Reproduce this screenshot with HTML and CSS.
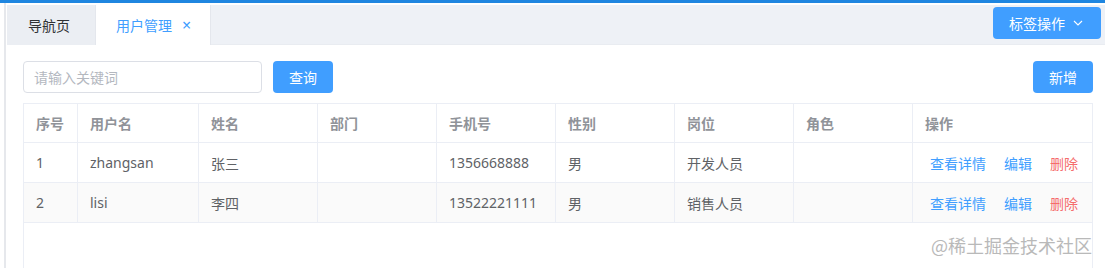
FILE: index.html
```html
<!DOCTYPE html>
<html lang="zh-CN">
<head>
  <meta charset="UTF-8">
  <title>用户管理</title>
  <link rel="stylesheet" href="styles.css">
</head>
<body>
  <div class="app-topline"></div>
  <div class="app-main">
    <div class="tabs-bar">
      <div class="tabs-list">
        <div class="tab-item">导航页</div>
        <div class="tab-item tab-item-active">用户管理<span class="tab-close">×</span></div>
      </div>
      <button class="btn btn-primary tab-action">标签操作
        <svg class="tab-action-arrow" viewBox="0 0 10 6" width="10" height="6"><polyline points="1,1 5,5 9,1" fill="none" stroke="#fff" stroke-width="1.1"/></svg>
      </button>
    </div>

    <div class="page-content">
      <div class="toolbar">
        <input class="search-input" type="text" placeholder="请输入关键词">
        <button class="btn btn-primary">查询</button>
        <div class="toolbar-spacer"></div>
        <button class="btn btn-primary">新增</button>
      </div>

      <div class="user-table-wrap">
        <table class="user-table">
          <colgroup>
            <col style="width:54px">
            <col style="width:121px">
            <col style="width:119px">
            <col style="width:119px">
            <col style="width:119px">
            <col style="width:119px">
            <col style="width:119px">
            <col style="width:119px">
            <col style="width:179px">
          </colgroup>
          <thead>
            <tr>
              <th>序号</th><th>用户名</th><th>姓名</th><th>部门</th><th>手机号</th><th>性别</th><th>岗位</th><th>角色</th><th class="last">操作</th>
            </tr>
          </thead>
          <tbody>
            <tr>
              <td class="cell-latin">1</td><td class="cell-latin">zhangsan</td><td>张三</td><td></td><td class="cell-latin">1356668888</td><td>男</td><td>开发人员</td><td></td>
              <td class="last actions"><a class="link">查看详情</a><a class="link">编辑</a><a class="link link-danger">删除</a></td>
            </tr>
            <tr class="row-striped">
              <td class="cell-latin">2</td><td class="cell-latin">lisi</td><td>李四</td><td></td><td class="cell-latin">13522221111</td><td>男</td><td>销售人员</td><td></td>
              <td class="last actions"><a class="link">查看详情</a><a class="link">编辑</a><a class="link link-danger">删除</a></td>
            </tr>
          </tbody>
        </table>
      </div>
    </div>
  </div>
  <div class="watermark">@稀土掘金技术社区</div>
</body>
</html>
```

FILE: styles.css
```css
body {
  margin: 0;
  font-family: "Noto Sans CJK SC", sans-serif;
  font-size: 14px;
  color: #606266;
  background: #fff;
  overflow: hidden;
}

.app-topline {
  height: 3px;
  background: #1f86e0;
}

.app-main {
  margin-left: 4px;
  border-left: 2px solid #e6e8ec;
  height: 265px;
  overflow: hidden;
}

.tabs-bar {
  box-sizing: border-box;
  display: flex;
  align-items: flex-start;
  height: 40px;
  margin: 2px 0 0 1px;
  padding-right: 4px;
  background: #eef1f6;
  border-bottom: 1px solid #e9ecf1;
}

.tabs-list {
  display: flex;
  align-self: stretch;
  flex: 1;
  margin-bottom: -1px;
}

.tab-item {
  display: flex;
  align-items: center;
  padding: 0 25px 0 21px;
  background: #ebeef3;
  color: #303133;
  border-right: 1px solid #e4e7ed;
}

.tab-item-active {
  padding: 0 19px 0 20px;
  background: #fff;
  color: #409eff;
}

.tab-close {
  margin-left: 10px;
  font-family: "Noto Sans", sans-serif;
  font-size: 16px;
  line-height: 1;
  color: #409eff;
}

.btn {
  height: 32px;
  padding: 0 16px;
  border: none;
  border-radius: 4px;
  font-family: inherit;
  font-size: 14px;
  cursor: pointer;
}

.btn-primary {
  background: #409eff;
  color: #fff;
}

.tab-action {
  display: flex;
  align-items: center;
  gap: 8px;
  margin-top: 2px;
  padding-right: 18px;
}

.page-content {
  padding: 16px 12px 0 17px;
}

.toolbar {
  display: flex;
  align-items: center;
  gap: 11px;
  margin-bottom: 10px;
}

.toolbar-spacer {
  flex: 1;
}

.search-input {
  box-sizing: border-box;
  width: 239px;
  height: 32px;
  padding: 0 10px;
  border: 1px solid #dcdfe6;
  border-radius: 4px;
  font-family: inherit;
  font-size: 14px;
  color: #606266;
  outline: none;
}

.search-input::placeholder {
  color: #b4b8bf;
}

.user-table-wrap {
  height: 200px;
  border: 1px solid #ebeef5;
}

.user-table {
  width: 100%;
  table-layout: fixed;
  border-collapse: separate;
  border-spacing: 0;
}

.user-table th,
.user-table td {
  box-sizing: border-box;
  padding: 0 0 0 12px;
  text-align: left;
  border-right: 1px solid #ebeef5;
  border-bottom: 1px solid #ebeef5;
  white-space: nowrap;
}

.user-table th {
  height: 39px;
  color: #909399;
  font-weight: 700;
}

.user-table td {
  height: 40px;
}

.user-table .cell-latin {
  font-family: "Noto Sans", sans-serif;
}

.user-table .last {
  border-right: none;
}

.row-striped td {
  background: #fafafa;
}

.actions {
  padding-left: 17px !important;
}

.link {
  color: #409eff;
  margin-right: 18px;
  cursor: pointer;
}

.link-danger {
  color: #f56c6c;
  margin-right: 0;
}

.watermark {
  position: absolute;
  right: 13px;
  top: 232px;
  font-size: 18px;
  color: #b9b9b9;
  text-shadow: 0 0 1px #fff;
}
```
